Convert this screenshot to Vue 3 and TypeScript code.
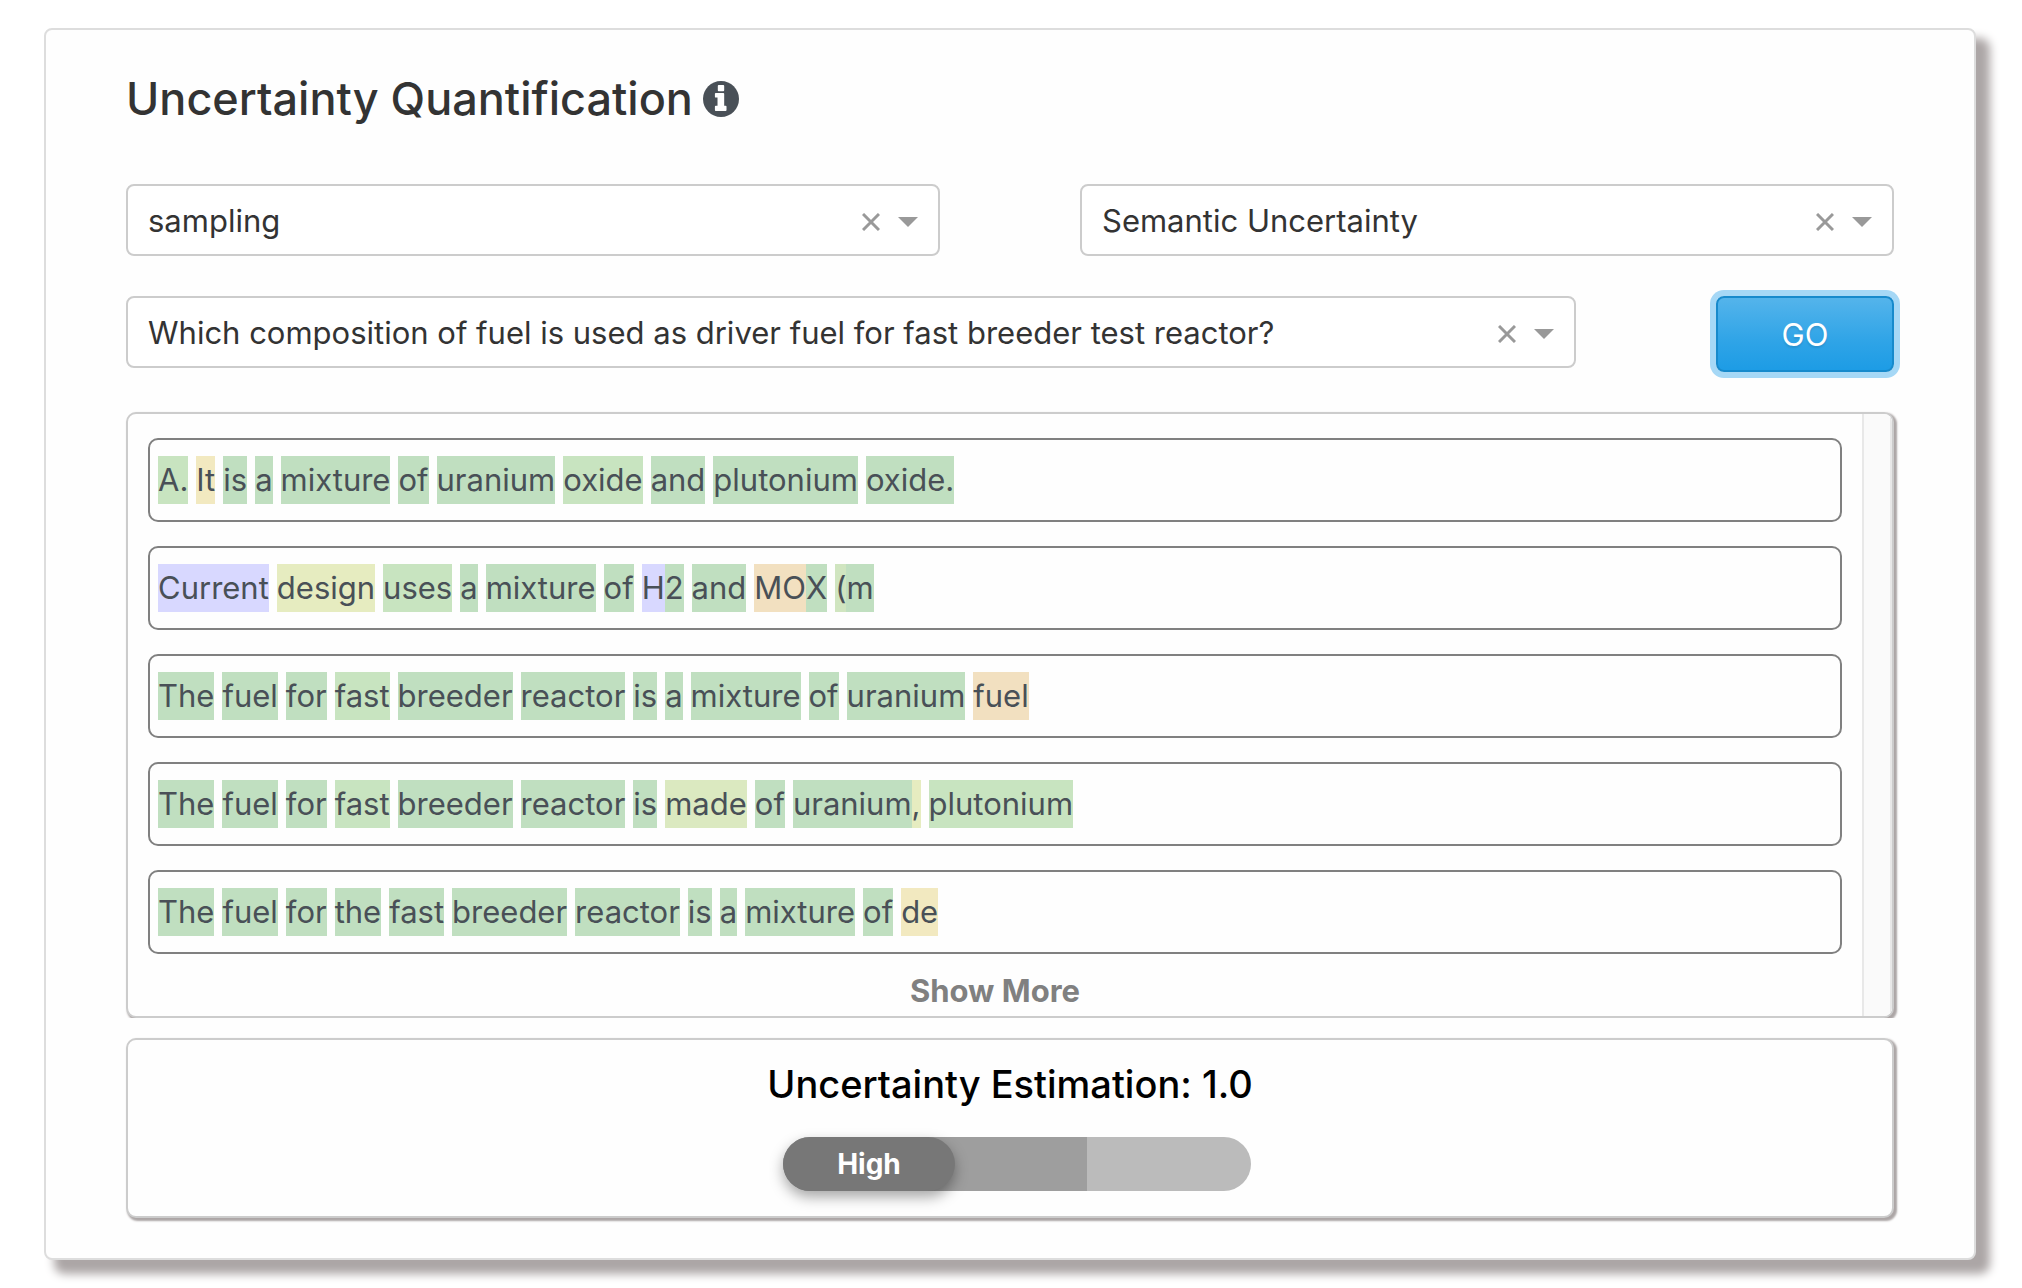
<script setup lang="ts">
import { ref } from 'vue'

type Tone = 'sure' | 'likely' | 'fair' | 'mild' | 'olive' | 'amber' | 'orange' | 'blue'
interface Piece { text: string; tone: Tone }

// Each word is a list of pieces, as one word may hold several tokens.
const tones: Record<string, Tone> = {
  g: 'sure', l: 'likely', f: 'fair', m: 'mild', o: 'olive', a: 'amber', r: 'orange', b: 'blue',
}
const parse = (line: string): Piece[][] =>
  line.split(' ').map((word) =>
    word.split('|').map((piece) => {
      const [text, tone] = piece.split('~')
      return { text, tone: tones[tone ?? 'g'] }
    }),
  )

const answers = [
  'A.~l It~a is a mixture of uranium oxide~l and plutonium oxide.',
  'Current~b design~o uses~l a mixture of H~b|2 and MO~r|X (~f|m',
  'The fuel for fast~l breeder reactor is a mixture of uranium fuel~r',
  'The fuel for fast~l breeder reactor is made~m of uranium|,~o plutonium~l',
  'The fuel for the fast breeder reactor is a mixture of de~a',
].map(parse)

const method = ref('sampling')
const measure = ref('Semantic Uncertainty')
const question = ref('Which composition of fuel is used as driver fuel for fast breeder test reactor?')
</script>

<template>
  <main class="card">
    <h1 class="title">
      Uncertainty Quantification
      <svg class="info" viewBox="8 8 496 496" aria-hidden="true">
        <path fill="currentColor" d="M256 8C119 8 8 119 8 256s111 248 248 248 248-111 248-248S393 8 256 8z" />
        <path fill="#fff" d="M224 64h64a12 12 0 0 1 12 12v60a12 12 0 0 1-12 12h-64a12 12 0 0 1-12-12V76a12 12 0 0 1 12-12zM332 408a12 12 0 0 1-12 12H184a12 12 0 0 1-12-12v-48a12 12 0 0 1 12-12h24V236h-24a12 12 0 0 1-12-12v-40a12 12 0 0 1 12-12h104a12 12 0 0 1 12 12v164h20a12 12 0 0 1 12 12z" />
      </svg>
    </h1>

    <div class="row">
      <div class="dropdown half">
        <select v-model="method" aria-label="Method"><option>sampling</option></select>
        <button class="clear" type="button" aria-label="Clear method">
          <svg viewBox="0 0 18 18"><path d="M1 1l16 16M17 1L1 17" /></svg>
        </button>
        <svg class="arrow" viewBox="0 0 20 10" aria-hidden="true"><path d="M0 0h20L10 10z" /></svg>
      </div>
      <div class="dropdown half">
        <select v-model="measure" aria-label="Measure"><option>Semantic Uncertainty</option></select>
        <button class="clear" type="button" aria-label="Clear measure">
          <svg viewBox="0 0 18 18"><path d="M1 1l16 16M17 1L1 17" /></svg>
        </button>
        <svg class="arrow" viewBox="0 0 20 10" aria-hidden="true"><path d="M0 0h20L10 10z" /></svg>
      </div>
    </div>

    <div class="row second">
      <div class="dropdown question">
        <select v-model="question" aria-label="Question">
          <option>Which composition of fuel is used as driver fuel for fast breeder test reactor?</option>
        </select>
        <button class="clear" type="button" aria-label="Clear question">
          <svg viewBox="0 0 18 18"><path d="M1 1l16 16M17 1L1 17" /></svg>
        </button>
        <svg class="arrow" viewBox="0 0 20 10" aria-hidden="true"><path d="M0 0h20L10 10z" /></svg>
      </div>
      <button class="go" type="button">GO</button>
    </div>

    <div class="clip">
      <section class="panel answers">
        <div class="list">
          <p v-for="(words, i) in answers" :key="i" class="answer">
            <span v-for="(word, j) in words" :key="j" class="word"><span v-for="(piece, k) in word" :key="k" :class="piece.tone">{{ piece.text }}</span></span>
          </p>
          <button class="more" type="button">Show More</button>
        </div>
        <div class="track"></div>
      </section>
    </div>

    <section class="panel estimate">
      <h2>Uncertainty Estimation: 1.0</h2>
      <div class="scale">
        <span class="level">High</span>
      </div>
    </section>
  </main>
</template>

<style>
body {
  margin: 0;
  background: #fff;
}
</style>

<style scoped>
.card {
  box-sizing: border-box;
  margin: 28px 46px 28px 44px;
  padding: 40px 80px;
  border: 2px solid #ddd;
  border-radius: 8px;
  background: #fefefe;
  box-shadow: 12px 12px 10px 2px #aca6a6;
  font-family: Inter, "Liberation Sans", sans-serif;
  font-size: 31px;
  color: #333;
}
button,
select {
  font: inherit;
  color: inherit;
  margin: 0;
}
.title {
  display: flex;
  align-items: center;
  gap: 10px;
  margin: 0 0 56px;
  font-size: 45px;
  line-height: 58px;
  font-weight: 500;
}
.info {
  width: 36px;
  height: 36px;
  color: #495057;
}
.row {
  display: flex;
  justify-content: space-between;
  align-items: flex-start;
  gap: 140px;
}
.second {
  margin-top: 40px;
}
.dropdown {
  box-sizing: border-box;
  display: flex;
  flex: 1;
  align-items: center;
  height: 72px;
  padding: 0 20px;
  border: 2px solid #ccc;
  border-radius: 8px;
  background: #fff;
}
.dropdown select {
  flex: 1;
  min-width: 0;
  height: 68px;
  padding: 0;
  border: 0;
  outline: 0;
  appearance: none;
  background: transparent;
}
.clear {
  display: flex;
  padding: 3px 0 0;
  border: 0;
  background: none;
}
.clear svg {
  width: 18px;
  height: 18px;
  fill: none;
  stroke: #999;
  stroke-width: 3px;
}
.arrow {
  width: 20px;
  height: 10px;
  margin: 3px 0 0 18px;
  fill: #999;
}
.go {
  width: 178px;
  height: 76px;
  padding: 0;
  border: 2px solid #178acc;
  border-radius: 8px;
  background: linear-gradient(#54b4eb, #2fa4e7 60%, #1d9ce5);
  box-shadow: 0 0 0 6px #a6d8f6;
  color: #fff;
  text-shadow: 0 2px 2px rgba(0, 0, 0, 0.1);
}
.clip {
  margin: 34px -10px 0;
  padding: 6px 10px 0;
  overflow: hidden;
}
.panel {
  box-sizing: border-box;
  border: 2px solid #ccc;
  border-radius: 10px;
  background: #fefefe;
  box-shadow: 2px 2px 2px 1px #aca6a6;
}
.answers {
  display: flex;
  overflow: hidden;
}
.list {
  flex: 1;
  padding: 24px 20px 0;
  text-align: center;
}
.answer {
  margin: 0 0 24px;
  padding: 16px 8px;
  border: 2px solid #808080;
  border-radius: 10px;
  line-height: 48px;
  color: #495057;
  text-align: left;
  display: flex;
  flex-wrap: wrap;
  column-gap: 8px;
}
.answer:last-of-type {
  margin-bottom: 14px;
}
.word {
  display: inline-flex;
}
.sure { background: #c0dfc0; }
.likely { background: #c8e4c0; }
.fair { background: #d0e5c0; }
.mild { background: #dbe9c0; }
.olive { background: #e6ecc0; }
.amber { background: #f2e9c0; }
.orange { background: #f2e0c0; }
.blue { background: #d8d8ff; }
.more {
  display: block;
  margin: 0 auto;
  padding: 0 0 2px;
  border: 0;
  background: none;
  font-weight: 700;
  line-height: 46px;
  color: #808080;
}
.track {
  width: 26px;
  border: solid #e8e8e8;
  border-width: 0 2px;
  background: #fafafa;
}
.estimate {
  margin-top: 20px;
  padding: 20px 0 25px;
  text-align: center;
}
.estimate h2 {
  margin: 0 0 29px;
  font-size: 38px;
  line-height: 48px;
  font-weight: 500;
  color: #000;
}
.scale {
  display: flex;
  width: 468px;
  height: 54px;
  margin: 0 auto;
  border-radius: 27px;
  background: linear-gradient(90deg, #9e9e9e 65%, #bbb 65%);
}
.estimate .scale {
  margin-left: calc(50% - 227px);
}
.level {
  width: 172px;
  border-radius: 27px;
  background: #777;
  box-shadow: 0 6px 14px rgba(0, 0, 0, 0.35);
  font-size: 28px;
  line-height: 54px;
  font-weight: 700;
  color: #fff;
}
</style>
